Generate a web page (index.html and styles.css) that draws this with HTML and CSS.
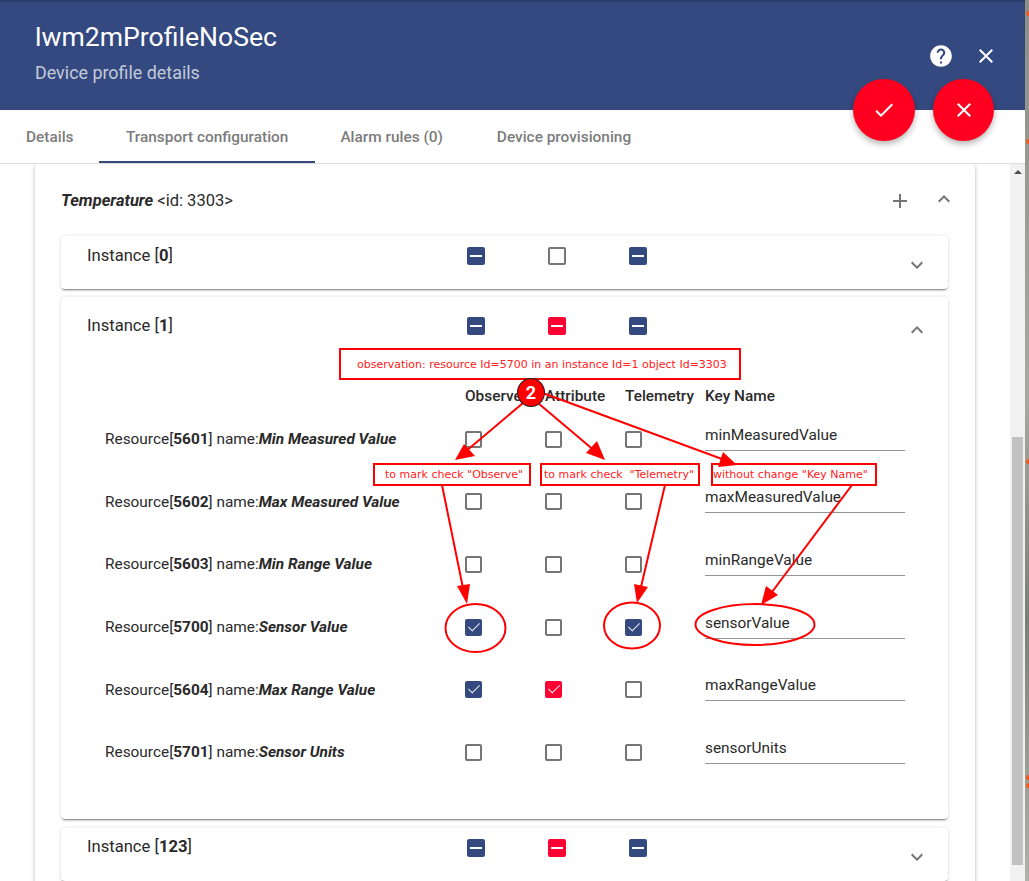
FILE: index.html
```html
<!DOCTYPE html>
<html>
<head>
	<meta charset="utf-8">
	<title>Device profile details</title>
	<link rel="stylesheet" href="styles.css">
</head>
<body>
	<section class="dialog">
		<header class="top">
			<div>
				<h1>lwm2mProfileNoSec</h1>
				<p>Device profile details</p>
			</div>
			<div class="top-icons">
				<svg viewBox="0 0 24 24" width="26" height="26"><path fill="#fff" d="M12 2C6.48 2 2 6.48 2 12s4.48 10 10 10 10-4.48 10-10S17.52 2 12 2zm1 17h-2v-2h2v2zm2.07-7.75l-.9.92C13.45 12.9 13 13.5 13 15h-2v-.5c0-1.1.45-2.1 1.17-2.83l1.24-1.26c.37-.36.59-.86.59-1.41 0-1.1-.9-2-2-2s-2 .9-2 2H8c0-2.21 1.79-4 4-4s4 1.79 4 4c0 .88-.36 1.68-.93 2.25z"/></svg>
				<svg viewBox="0 0 24 24" width="24" height="24"><path fill="#fff" d="M19 6.41L17.59 5 12 10.59 6.41 5 5 6.41 10.59 12 5 17.59 6.41 19 12 13.41 17.59 19 19 17.59 13.41 12z"/></svg>
			</div>
		</header>
		<nav class="tabs">
			<a class="tab">Details</a>
			<a class="tab active">Transport configuration</a>
			<a class="tab">Alarm rules (0)</a>
			<a class="tab">Device provisioning</a>
		</nav>
		<button class="fab fab-ok"><svg viewBox="0 0 24 24" width="24" height="24"><path fill="#fff" d="M9 16.17L4.83 12l-1.42 1.41L9 19 21 7l-1.41-1.41z"/></svg></button>
		<button class="fab fab-no"><svg viewBox="0 0 24 24" width="24" height="24"><path fill="#fff" d="M19 6.41L17.59 5 12 10.59 6.41 5 5 6.41 10.59 12 5 17.59 6.41 19 12 13.41 17.59 19 19 17.59 13.41 12z"/></svg></button>

		<div class="body">
			<div class="scroll">
				<section class="object">
					<div class="object-head">
						<span><b><i>Temperature</i></b> &lt;id: 3303&gt;</span>
						<svg class="ico plus" viewBox="0 0 24 24" width="24" height="24"><path d="M19 13h-6v6h-2v-6H5v-2h6V5h2v6h6v2z"/></svg>
						<svg class="ico up" viewBox="0 0 24 24" width="24" height="24"><path d="M12 8l-6 6 1.41 1.41L12 10.83l4.59 4.58L18 14z"/></svg>
					</div>

					<section class="instance short">
						<div class="inst-head">
							<span class="inst-name">Instance [<b>0</b>]</span>
							<span class="box blue dash"></span>
							<span class="box"></span>
							<span class="box blue dash"></span>
							<svg class="ico chev" viewBox="0 0 24 24" width="24" height="24"><path d="M16.59 8.59L12 13.17 7.41 8.59 6 10l6 6 6-6z"/></svg>
						</div>
					</section>

					<section class="instance open">
						<div class="inst-head">
							<span class="inst-name">Instance [<b>1</b>]</span>
							<span class="box blue dash"></span>
							<span class="box red dash"></span>
							<span class="box blue dash"></span>
							<svg class="ico chev" viewBox="0 0 24 24" width="24" height="24"><path d="M12 8l-6 6 1.41 1.41L12 10.83l4.59 4.58L18 14z"/></svg>
						</div>
						<div class="res-table">
							<div class="res-titles">
								<span></span><b>Observe</b><b>Attribute</b><b>Telemetry</b><b>Key Name</b>
							</div>
							<div class="res">
								<span>Resource[<b>5601</b>] name:<b><i>Min Measured Value</i></b></span>
								<span class="box"></span><span class="box"></span><span class="box"></span>
								<span class="key">minMeasuredValue</span>
							</div>
							<div class="res">
								<span>Resource[<b>5602</b>] name:<b><i>Max Measured Value</i></b></span>
								<span class="box"></span><span class="box"></span><span class="box"></span>
								<span class="key">maxMeasuredValue</span>
							</div>
							<div class="res">
								<span>Resource[<b>5603</b>] name:<b><i>Min Range Value</i></b></span>
								<span class="box"></span><span class="box"></span><span class="box"></span>
								<span class="key">minRangeValue</span>
							</div>
							<div class="res">
								<span>Resource[<b>5700</b>] name:<b><i>Sensor Value</i></b></span>
								<span class="box blue tick"></span><span class="box"></span><span class="box blue tick"></span>
								<span class="key">sensorValue</span>
							</div>
							<div class="res">
								<span>Resource[<b>5604</b>] name:<b><i>Max Range Value</i></b></span>
								<span class="box blue tick"></span><span class="box red tick"></span><span class="box"></span>
								<span class="key">maxRangeValue</span>
							</div>
							<div class="res">
								<span>Resource[<b>5701</b>] name:<b><i>Sensor Units</i></b></span>
								<span class="box"></span><span class="box"></span><span class="box"></span>
								<span class="key">sensorUnits</span>
							</div>
						</div>
					</section>

					<section class="instance short last">
						<div class="inst-head">
							<span class="inst-name">Instance [<b>123</b>]</span>
							<span class="box blue dash"></span>
							<span class="box red dash"></span>
							<span class="box blue dash"></span>
							<svg class="ico chev" viewBox="0 0 24 24" width="24" height="24"><path d="M16.59 8.59L12 13.17 7.41 8.59 6 10l6 6 6-6z"/></svg>
						</div>
					</section>
				</section>
			</div>
			<div class="scrollbar">
				<span class="arrow"></span>
				<span class="thumb"></span>
			</div>
		</div>
	</section>
	<div class="desk">
		<span class="dot d1"></span><span class="dot d2"></span><span class="dot d3"></span><span class="dot d4"></span><span class="dot d5"></span>
	</div>

	<!-- red notes drawn on top of the screenshot -->
	<svg class="marks" width="1029" height="881" viewBox="0 0 1029 881">
		<g fill="none" stroke="#fe0000" stroke-width="2">
			<line x1="523" y1="403" x2="465" y2="452"/>
			<line x1="538" y1="403" x2="596" y2="452"/>
			<line x1="540" y1="392" x2="722" y2="459"/>
			<line x1="442" y1="485" x2="463" y2="588"/>
			<line x1="665" y1="485" x2="641" y2="587"/>
			<line x1="852" y1="485" x2="772" y2="592"/>
			<ellipse cx="475.5" cy="628" rx="30" ry="24"/>
			<ellipse cx="632" cy="625.500" rx="28" ry="23"/>
			<ellipse cx="755" cy="624.500" rx="59.500" ry="20.500"/>
		</g>
		<g fill="#fe0000">
			<polygon points="455,460 464,444 475,456"/>
			<polygon points="605,460 586,453 597,441"/>
			<polygon points="737,465 718,467 723,452"/>
			<polygon points="467,604 457,586 470,584"/>
			<polygon points="637,603 634,584 648,587"/>
			<polygon points="761,605 766,586 778,595"/>
		</g>
	</svg>
	<div class="note n-main">observation: resource Id=5700 in an instance Id=1 object Id=3303</div>
	<div class="note n-obs">to mark check "Observe"</div>
	<div class="note n-tel">to mark check &nbsp;"Telemetry"</div>
	<div class="note n-key">without change "Key Name"</div>
	<div class="step">2</div>
</body>
</html>
```

FILE: styles.css
```css
html, body {
	margin: 0;
	height: 881px;
	overflow: hidden;
}
body {
	position: relative;
	display: flex;
	width: 1029px;
	font-family: Roboto, sans-serif;
	font-size: 15.400px;
	color: #2a2a2a;
	background: #fff;
}
.dialog {
	position: relative;
	display: flex;
	flex-direction: column;
	width: 1025px;
	height: 881px;
}
.top {
	display: flex;
	justify-content: space-between;
	box-sizing: border-box;
	height: 110px;
	padding: 20px 30px 0 35px;
	border-top: 2px solid #2b3d6b;
	background: #34497f;
	color: #fff;
}
.top h1 {
	margin: 0;
	font-size: 26.600px;
	font-weight: 400;
	line-height: 30px;
}
.top p {
	margin: 11px 0 0;
	font-size: 17.900px;
	line-height: 20px;
	color: #c3cada;
}
.top-icons {
	display: flex;
	align-items: center;
	gap: 20px;
	height: 24px;
	margin-top: 22px;
	margin-right: -3px;
}
.tabs {
	display: flex;
	box-sizing: border-box;
	height: 54px;
	border-bottom: 1px solid #dedede;
}
.tab {
	box-sizing: border-box;
	height: 53px;
	padding: 0 27px;
	font-weight: 500;
	line-height: 55px;
	color: #7c7c7c;
}
.tab:first-child {
	width: 99px;
	padding-left: 26px;
}
.tab.active {
	border-bottom: 2px solid #34497f;
}
.tab.active + .tab {
	margin-left: -2px;
}
.fab {
	position: absolute;
	top: 79px;
	display: flex;
	align-items: center;
	justify-content: center;
	width: 62px;
	height: 62px;
	padding: 0;
	border: 0;
	border-radius: 50%;
	background: #ff0021;
	box-shadow: 0 3px 6px rgba(0, 0, 0, .3);
}
.fab-ok { left: 853px; }
.fab-no { left: 933px; width: 61px; }

.body {
	display: flex;
	flex: 1;
	min-height: 0;
}
.scroll {
	flex: 1;
	overflow: hidden;
	padding: 0 35px;
}
.object {
	height: 760px;
	padding: 0 27px 0 26px;
	background: #fff;
	box-shadow: 0 1px 4px rgba(0, 0, 0, .3);
	border-radius: 4px 4px 0 0;
}
.object-head {
	display: flex;
	align-items: center;
	height: 72px;
	font-size: 16.500px;
}
.object-head span {
	flex: 1;
}
.ico {
	fill: #757575;
}
.plus {
	margin-top: 1px;
	margin-right: 20px;
}
.up {
	margin-top: -3px;
	margin-right: -8px;
}

.instance {
	position: relative;
	border-radius: 4px;
	background: #fff;
	box-shadow: 0 2px 2px -1px rgba(0, 0, 0, .5), 0 0 4px rgba(0, 0, 0, .12);
}
.instance.short {
	height: 53px;
}
.instance.open {
	height: 522px;
	margin: 8px 0 9px;
}
.inst-head {
	display: flex;
	align-items: flex-start;
	padding: 10px 0 0 26px;
}
.instance.open .inst-head {
	padding-top: 19px;
}
.last .inst-head {
	padding-top: 9px;
}
.inst-name {
	width: 380px;
	font-size: 16.600px;
	line-height: 20px;
}
.inst-head .box {
	width: 18px;
	height: 18px;
	margin: 1px 63px 0 0;
}
.inst-head .chev {
	position: absolute;
	top: 17px;
	right: 19px;
}
.instance.open .chev {
	top: 21px;
}
.last .inst-head .box {
	margin-top: 2px;
}
.box {
	display: block;
	box-sizing: border-box;
	width: 17px;
	height: 17px;
	border: 2px solid #757575;
	border-radius: 2px;
	position: relative;
}
.box.blue {
	border-color: #34497f;
	background: #34497f;
}
.box.red {
	border-color: #ff0033;
	background: #ff0033;
}
.box.dash::after {
	content: "";
	position: absolute;
	top: 5.500px;
	left: 1px;
	width: 12px;
	height: 2px;
	background: #fff;
}
.box.tick::after {
	content: "";
	position: absolute;
	top: -1px;
	left: 3.500px;
	width: 5px;
	height: 10px;
	border: solid #eee;
	border-width: 0 1.500px 1.500px 0;
	transform: rotate(45deg);
}
.res-table {
	margin: 51px 0 0 44px;
}
.res-titles, .res {
	display: grid;
	grid-template-columns: 360px 80px 80px 80px 200px;
	align-items: center;
}
.res-titles {
	height: 18px;
	margin-bottom: 2.700px;
	line-height: 18px;
}
.res-titles b {
	font-weight: 500;
	white-space: nowrap;
}
.res {
	height: 62.700px;
}
.key {
	display: block;
	box-sizing: border-box;
	height: 30px;
	margin-top: -7px;
	border-bottom: 1px solid #949494;
	line-height: 29px;
}

.scrollbar {
	position: relative;
	width: 15px;
	background: #f1f1f1;
}
.arrow {
	position: absolute;
	top: 6px;
	left: 4px;
	width: 0;
	height: 0;
	border: 4px solid transparent;
	border-top: 0;
	border-bottom: 4px solid #505050;
}
.thumb {
	position: absolute;
	top: 273px;
	left: 2px;
	width: 11px;
	height: 428px;
	background: #c1c1c1;
}

.desk {
	position: relative;
	width: 4px;
	background: linear-gradient(#8d8f86, #a8aaa0 45%, #7c7e78 70%, #b1b3aa);
}
.dot {
	position: absolute;
	left: 1px;
	width: 5px;
	height: 5px;
	border-radius: 50%;
	background: #ef5a1e;
}
.d1 { top: 11px; }
.d2 { top: 139px; }
.d3 { top: 459px; }
.d4 { top: 775px; }
.d5 { top: 783px; }

.marks {
	position: absolute;
	top: 0;
	left: 0;
}
.note {
	position: absolute;
	box-sizing: border-box;
	border: 2px solid #fe0000;
	font-family: "DejaVu Sans", sans-serif;
	font-size: 11px;
	white-space: nowrap;
	color: #ff2020;
}
.n-main {
	top: 348px;
	left: 339px;
	width: 402px;
	height: 32px;
	padding-left: 16px;
	line-height: 29px;
}
.n-obs, .n-tel, .n-key {
	top: 463px;
	height: 23px;
	line-height: 19px;
}
.n-obs { left: 373px; width: 158px; padding-left: 10px; }
.n-tel { left: 540px; width: 160px; padding-left: 2px; }
.n-key { left: 711px; width: 166px; padding-left: 0; }
.step {
	position: absolute;
	top: 378px;
	left: 517px;
	box-sizing: border-box;
	width: 28px;
	height: 29px;
	border: 1px solid #222;
	border-radius: 50%;
	background: #fe0000;
	font-size: 18px;
	font-weight: 700;
	line-height: 27px;
	text-align: center;
	color: #fff;
}
```
